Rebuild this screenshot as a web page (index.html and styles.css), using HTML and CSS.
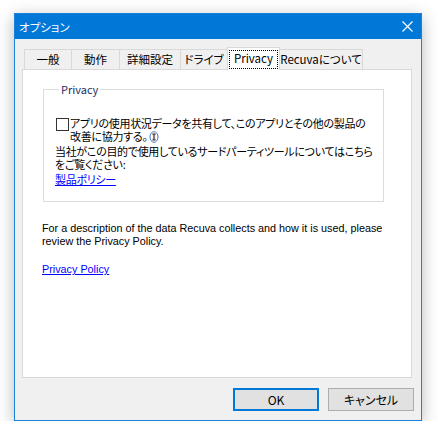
FILE: index.html
```html
<!DOCTYPE html>
<html lang="ja">
<head>
  <meta charset="UTF-8" />
  <meta name="viewport" content="width=device-width, initial-scale=1.0" />
  <title>オプション</title>
  <link rel="stylesheet" href="styles.css">
</head>
<body>
  <div class="window">
    <div class="titlebar">
      <span class="title">オプション</span>
      <svg class="close" width="11" height="11" viewBox="0 0 11 11">
        <path d="M0.5 0.5 L10.5 10.5 M10.5 0.5 L0.5 10.5" stroke="#fff" stroke-width="1.2" fill="none" />
      </svg>
    </div>

    <div class="content">
      <div class="tabs">
        <div class="tab tab-general">一般</div>
        <div class="tab tab-action">動作</div>
        <div class="tab tab-advanced">詳細設定</div>
        <div class="tab tab-drives">ドライブ</div>
        <div class="tab tab-privacy active"><span class="focus">Privacy</span></div>
        <div class="tab tab-about">Recuvaについて</div>
      </div>

      <div class="panel">
        <fieldset class="group">
          <legend>Privacy</legend>
          <label class="check-row">
            <span class="checkbox"></span>
            <span class="check-text">アプリの使用状況データを共有して、このアプリとその他の製品の<br>改善に協力する。<svg class="info" width="10" height="12" viewBox="0 0 10 12">
                <ellipse cx="5" cy="6" rx="4" ry="5.3" fill="none" stroke="#3a7bd0" stroke-width="1" />
                <path d="M3.5 3.2 H6.5 M5 3.2 V8.8 M3.5 8.8 H6.5" stroke="#f0a040" stroke-width="2.2" fill="none" />
                <path d="M3.5 3.2 H6.5 M5 3.2 V8.8 M3.5 8.8 H6.5" stroke="#1d4f9e" stroke-width="1" fill="none" />
              </svg></span>
          </label>
          <p class="note">当社がこの目的で使用しているサードパーティツールについてはこちら<br>をご覧ください:</p>
          <a class="link" href="#">製品ポリシー</a>
        </fieldset>

        <p class="desc">For a description of the data Recuva collects and how it is used, please<br>review the Privacy Policy.</p>
        <a class="link policy" href="#">Privacy Policy</a>
      </div>

      <div class="buttons">
        <button class="btn btn-default">OK</button>
        <button class="btn">キャンセル</button>
      </div>
    </div>
  </div>
</body>
</html>
```

FILE: styles.css
```css
/* Fundo e fonte base */
body {
  margin: 0;
  background: #ffffff;
  font-family: "Noto Sans CJK JP", sans-serif;
  font-size: 11px;
  font-feature-settings: "palt";
  color: #000;
}

/* Janela */
.window {
  margin: 13px 0 0 14px;
  width: 408px;
  height: 408px;
  box-sizing: border-box;
  border: 1px solid #1a82d9;
  background: #f0f0f0;
  box-shadow: 0 4px 16px rgba(0, 0, 0, 0.28);
  display: flex;
  flex-direction: column;
}

.titlebar {
  height: 25px;
  background: #0078d7;
  color: #fff;
  display: flex;
  align-items: center;
  justify-content: space-between;
  padding: 0 8px 0 4px;
  font-size: 11.5px;
}
.title {
  line-height: 14px;
}
.close {
  display: block;
}

.content {
  flex: 1;
  padding-left: 7px;
}

/* Abas */
.tabs {
  height: 30px;
  display: flex;
  align-items: flex-end;
  padding-left: 2px;
}
.tab {
  height: 20px;
  box-sizing: border-box;
  border: 1px solid #d9d9d9;
  border-bottom: none;
  margin-right: -1px;
  text-align: center;
  line-height: 18px;
  font-size: 11.5px;
  white-space: nowrap;
}
.tab-general { width: 48px; }
.tab-action { width: 49px; }
.tab-advanced { width: 62px; }
.tab-drives { width: 48px; }
.tab-privacy { width: 53px; }
.tab-about { width: 84px; }

.tab.active {
  position: relative;
  z-index: 1;
  height: 23px;
  margin-bottom: -1px;
  background: #fff;
}
.focus {
  display: block;
  height: 19px;
  box-sizing: border-box;
  margin: 2px 1px 0;
  border: 1px dotted #000;
  line-height: 15px;
}

/* Painel */
.panel {
  width: 390px;
  height: 309px;
  box-sizing: border-box;
  border: 1px solid #d9d9d9;
  background: #fff;
  padding-left: 19px;
}

.group {
  width: 341px;
  box-sizing: border-box;
  margin: 13px 0 0 1px;
  padding: 0 0 14px 11px;
  border: 1px solid #dcdcdc;
  white-space: nowrap;
  letter-spacing: -0.3px;
}
.group legend {
  margin-left: 4px;
  padding: 0 2px;
  line-height: 13px;
  letter-spacing: 0;
  color: #1c2c64;
}

.check-row {
  display: flex;
  align-items: flex-start;
  margin-top: 21px;
  line-height: 13px;
}
.checkbox {
  flex: none;
  width: 13px;
  height: 13px;
  box-sizing: border-box;
  border: 1px solid #333;
  background: #fff;
  margin: 1px 1px 0 1px;
}
.check-text {
  padding-top: 0;
}
.info {
  margin-left: 1px;
  vertical-align: -2px;
}

.note {
  margin: 2px 0 0;
  line-height: 13px;
}

.link {
  display: inline-block;
  color: #0000ff;
  line-height: 13px;
}

.desc {
  margin: 20px 0 0;
  font-family: "Liberation Sans", Arial, sans-serif;
  font-size: 10.8px;
  line-height: 13px;
  white-space: nowrap;
}
.policy {
  margin-top: 15px;
  font-family: "Liberation Sans", Arial, sans-serif;
  font-size: 10.8px;
}

/* Botões */
.buttons {
  display: flex;
  justify-content: flex-end;
  gap: 9px;
  padding: 10px 7px 0 0;
}
.btn {
  width: 86px;
  height: 23px;
  box-sizing: border-box;
  border: 1px solid #adadad;
  background: #e1e1e1;
  font-family: "Noto Sans CJK JP", sans-serif;
  font-size: 12px;
  font-feature-settings: "palt";
  color: #000;
  padding: 0;
}
.btn-default {
  border: 2px solid #0078d7;
}
```
